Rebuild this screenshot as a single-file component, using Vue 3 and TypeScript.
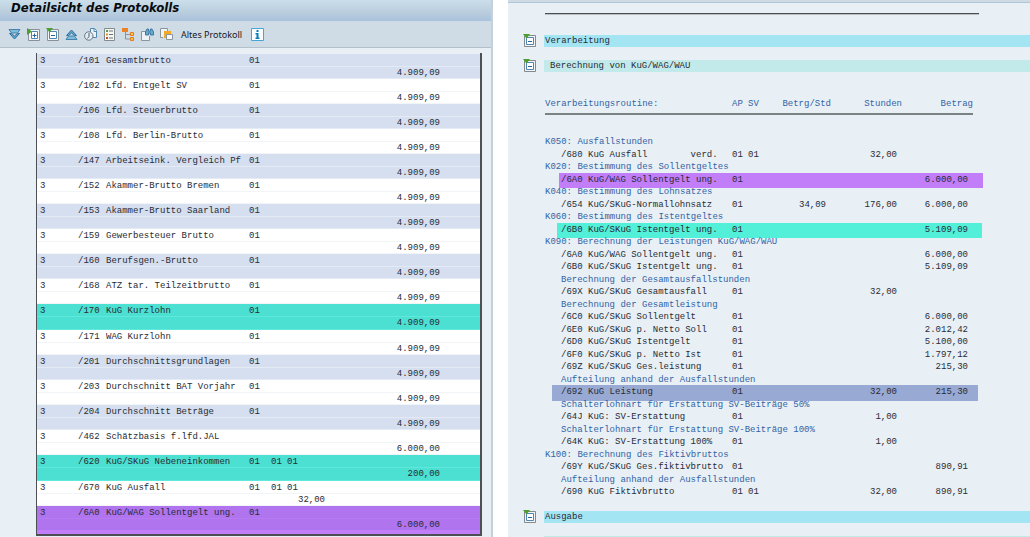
<script setup lang="ts">
interface WageRecord {
  code: string
  name: string
  ap?: string
  split?: boolean
  hours?: string
  amount?: string
  tone?: 'teal' | 'purple'
}

interface Line {
  kind: 'group' | 'sub' | 'item'
  text: string
  ap?: string
  sv?: string
  rate?: string
  hours?: string
  amount?: string
  mark?: 'purple' | 'mint' | 'indigo'
}

const rec = (code: string, name: string, extra: Partial<WageRecord> = {}): WageRecord => ({
  code,
  name,
  ap: '01',
  amount: '4.909,09',
  ...extra,
})

const records: WageRecord[] = [
  rec('/101', 'Gesamtbrutto'),
  rec('/102', 'Lfd. Entgelt SV'),
  rec('/106', 'Lfd. Steuerbrutto'),
  rec('/108', 'Lfd. Berlin-Brutto'),
  rec('/147', 'Arbeitseink. Vergleich Pf'),
  rec('/152', 'Akammer-Brutto Bremen'),
  rec('/153', 'Akammer-Brutto Saarland'),
  rec('/159', 'Gewerbesteuer Brutto'),
  rec('/160', 'Berufsgen.-Brutto'),
  rec('/168', 'ATZ tar. Teilzeitbrutto'),
  rec('/170', 'KuG Kurzlohn', { tone: 'teal' }),
  rec('/171', 'WAG Kurzlohn'),
  rec('/201', 'Durchschnittsgrundlagen'),
  rec('/203', 'Durchschnitt BAT Vorjahr'),
  rec('/204', 'Durchschnitt Beträge'),
  rec('/462', 'Schätzbasis f.lfd.JAL', { ap: '', amount: '6.000,00' }),
  rec('/620', 'KuG/SKuG Nebeneinkommen', { split: true, amount: '200,00', tone: 'teal' }),
  rec('/670', 'KuG Ausfall', { split: true, hours: '32,00', amount: '' }),
  rec('/6A0', 'KuG/WAG Sollentgelt ung.', { amount: '6.000,00', tone: 'purple' }),
]

const group = (text: string): Line => ({ kind: 'group', text })
const sub = (text: string): Line => ({ kind: 'sub', text })
const item = (text: string, extra: Partial<Line> = {}): Line => ({ kind: 'item', text, ap: '01', ...extra })

const lines: Line[] = [
  group('K050: Ausfallstunden'),
  item('/680 KuG Ausfall        verd.', { sv: '01', hours: '32,00' }),
  group('K020: Bestimmung des Sollentgeltes'),
  item('/6A0 KuG/WAG Sollentgelt ung.', { amount: '6.000,00', mark: 'purple' }),
  group('K040: Bestimmung des Lohnsatzes'),
  item('/654 KuG/SKuG-Normallohnsatz', { rate: '34,09', hours: '176,00', amount: '6.000,00' }),
  group('K060: Bestimmung des Istentgeltes'),
  item('/6B0 KuG/SKuG Istentgelt ung.', { amount: '5.109,09', mark: 'mint' }),
  group('K090: Berechnung der Leistungen KuG/WAG/WAU'),
  item('/6A0 KuG/WAG Sollentgelt ung.', { amount: '6.000,00' }),
  item('/6B0 KuG/SKuG Istentgelt ung.', { amount: '5.109,09' }),
  sub('Berechnung der Gesamtausfallstunden'),
  item('/69X KuG/SKuG Gesamtausfall', { hours: '32,00' }),
  sub('Berechnung der Gesamtleistung'),
  item('/6C0 KuG/SKuG Sollentgelt', { amount: '6.000,00' }),
  item('/6E0 KuG/SKuG p. Netto Soll', { amount: '2.012,42' }),
  item('/6D0 KuG/SKuG Istentgelt', { amount: '5.100,00' }),
  item('/6F0 KuG/SKuG p. Netto Ist', { amount: '1.797,12' }),
  item('/69Z KuG/SKuG Ges.leistung', { amount: '215,30' }),
  sub('Aufteilung anhand der Ausfallstunden'),
  item('/692 KuG Leistung', { hours: '32,00', amount: '215,30', mark: 'indigo' }),
  sub('Schalterlohnart für Erstattung SV-Beiträge 50%'),
  item('/64J KuG: SV-Erstattung', { hours: '1,00' }),
  sub('Schalterlohnart für Erstattung SV-Beiträge 100%'),
  item('/64K KuG: SV-Erstattung 100%', { hours: '1,00' }),
  group('K100: Berechnung des Fiktivbruttos'),
  item('/69Y KuG/SKuG Ges.fiktivbrutto', { amount: '890,91' }),
  sub('Aufteilung anhand der Ausfallstunden'),
  item('/690 KuG Fiktivbrutto', { sv: '01', hours: '32,00', amount: '890,91' }),
]
</script>

<template>
  <main class="screen">
    <section class="detail">
      <h1 class="title">Detailsicht des Protokolls</h1>
      <div class="toolbar">
        <button type="button" aria-label="Alles expandieren">
          <svg viewBox="0 0 13 13"><path d="M1 1.500h11L9.500 5h-6z" fill="#7fbbdd" stroke="#4682aa" /><path d="M1.500 5.500h2l3 2.500 3-2.500h2l-5 5.500z" fill="#5ba9d2" stroke="#356f99" /></svg>
        </button>
        <button type="button" aria-label="Teilbaum expandieren">
          <svg viewBox="0 0 13 13"><path d="M1.500 1.500h11v11h-11z" fill="#f1f5f7" stroke="#8a9196" /><path d="M4.500 3.500h6v7h-6z" fill="#fff" stroke="#5186b0" /><path d="M5.500 7.500h4M7.500 5.500v4" stroke="#2b6394" /><path d="M0 0l5 3.500L0 7z" fill="#4f9f2c" /></svg>
        </button>
        <button type="button" aria-label="Teilbaum komprimieren">
          <svg viewBox="0 0 13 13"><path d="M1.500 1.500h11v11h-11z" fill="#f1f5f7" stroke="#8a9196" /><path d="M3.500 3.500h7v7h-7z" fill="#fff" stroke="#5186b0" /><path d="M5 7.500h4" stroke="#2b6394" /><path d="M0 0h7L3.500 4.500z" fill="#4f9f2c" /></svg>
        </button>
        <button type="button" aria-label="Alles komprimieren">
          <svg viewBox="0 0 13 13"><path d="M1 11.500h11L9.500 8h-6z" fill="#7fbbdd" stroke="#4682aa" /><path d="M1.500 7.500h2l3-2.500 3 2.500h2l-5-5.500z" fill="#5ba9d2" stroke="#356f99" /></svg>
        </button>
        <button type="button" aria-label="Zeitscheibe">
          <svg viewBox="0 0 13 13"><path d="M6.500.500h4l2 2v7h-6z" fill="#eef5fa" stroke="#5388ae" /><path d="M10 .500v3h2.500" fill="none" stroke="#5388ae" /><circle cx="4.800" cy="8" r="4.200" fill="#e5edf3" stroke="#6b7780" /><path d="M5 5v3.500L3.500 10.500" fill="none" stroke="#3d5f7c" /></svg>
        </button>
        <button type="button" aria-label="Legende">
          <svg viewBox="0 0 13 13"><path d="M1.500.500h10v12h-10z" fill="#f6f6f1" stroke="#848b8f" /><path d="M3 2h2v2H3z" fill="#5a9a52" /><path d="M3 5.500h2v2H3z" fill="#d79a25" /><path d="M3 9h2v2H3z" fill="#b75335" /><path d="M6 3h4M6 6.500h4M6 10h4" stroke="#68747c" /></svg>
        </button>
        <button type="button" aria-label="Hierarchie">
          <svg viewBox="0 0 13 13"><path d="M3.500 4v7H8M3.500 6.500H8" fill="none" stroke="#8793a0" /><path d="M0 0h6v4H0z" fill="#ee8227" /><path d="M8.500 4.500h3v3h-3zM8.500 9.500h3v3h-3z" fill="#ffc04a" stroke="#e27d24" /></svg>
        </button>
        <button type="button" aria-label="Suchen">
          <svg viewBox="0 0 13 13"><path d="M5 3.500H.500v9h8V8" fill="#edf3f7" stroke="#8a959c" /><path d="M4.500 7V4L6 1h1.500v2h2V1H11l1.500 3v3h-3V5h-2v2z" fill="#69a7cb" stroke="#3c7aa4" /></svg>
        </button>
        <button type="button" aria-label="Nächsten Treffer suchen">
          <svg viewBox="0 0 13 13"><path d="M3 9.500H.500v-9h7V3" fill="#edf3f7" stroke="#8a959c" /><path d="M4 3h7v7H4z" fill="#f3a928" /><path d="M6.500 6.500h6v5h-6z" fill="#f7fafc" stroke="#8a959c" /></svg>
        </button>
        <button type="button" class="text-button">Altes Protokoll</button>
        <button type="button" aria-label="Information">
          <svg viewBox="0 0 13 13"><path d="M.500.500h12v12H.500z" fill="#fafdff" stroke="#49a5d5" /><path d="M5.500 2h2v2h-2zM4.500 5h3v4.500h1V11h-4V9.500h1v-3h-1z" fill="#087db9" /></svg>
        </button>
      </div>

      <div class="records-wrap">
        <table class="records" aria-label="Lohnarten">
          <colgroup>
            <col class="c-level" /><col class="c-code" /><col class="c-name" />
            <col class="c-ap" /><col class="c-one" /><col class="c-two" /><col />
          </colgroup>
          <tbody v-for="r in records" :key="r.code" :class="r.tone">
            <tr>
              <td>3</td>
              <td>{{ r.code }}</td>
              <td>{{ r.name }}</td>
              <td>{{ r.ap }}</td>
              <td>{{ r.split ? '01' : '' }}</td>
              <td>{{ r.split ? '01' : '' }}</td>
              <td></td>
            </tr>
            <tr>
              <td colspan="6" class="num">{{ r.hours }}</td>
              <td class="num amount">{{ r.amount }}</td>
            </tr>
          </tbody>
        </table>
      </div>
    </section>

    <section class="log">
      <div class="strip"></div>
      <hr class="rule" />
      <div class="section first">
        <button type="button" class="node" aria-label="Verarbeitung komprimieren">
          <svg viewBox="0 0 13 13"><path d="M1.500 1.500h11v11h-11z" fill="#f1f5f7" stroke="#84898d" /><path d="M3.500 3.500h7v7h-7z" fill="#fff" stroke="#5186b0" /><path d="M5 7.500h4" stroke="#2b6394" /><path d="M0 0h7L3.500 4.500z" fill="#4f9f2c" /></svg>
        </button>
        <h2 class="bar cyan">Verarbeitung</h2>
      </div>
      <div class="section">
        <button type="button" class="node" aria-label="Berechnung komprimieren">
          <svg viewBox="0 0 13 13"><path d="M1.500 1.500h11v11h-11z" fill="#f1f5f7" stroke="#84898d" /><path d="M3.500 3.500h7v7h-7z" fill="#fff" stroke="#5186b0" /><path d="M5 7.500h4" stroke="#2b6394" /><path d="M0 0h7L3.500 4.500z" fill="#4f9f2c" /></svg>
        </button>
        <h3 class="bar pale">Berechnung von KuG/WAG/WAU</h3>
      </div>

      <div class="lines-wrap">
        <table class="lines">
          <colgroup>
            <col class="l-indent" /><col /><col class="l-ap" /><col class="l-sv" />
            <col class="l-rate" /><col class="l-num" /><col class="l-num" />
          </colgroup>
          <thead>
            <tr>
              <th colspan="2">Verarbeitungsroutine:</th>
              <th>AP</th>
              <th>SV</th>
              <th class="right">Betrg/Std</th>
              <th class="right">Stunden</th>
              <th class="right">Betrag</th>
            </tr>
          </thead>
          <tbody>
            <tr v-for="(l, i) in lines" :key="i" :class="[l.kind, l.mark ? 'mark ' + l.mark : '']">
              <td v-if="l.kind === 'group'" colspan="7">{{ l.text }}</td>
              <template v-else-if="l.kind === 'sub'">
                <td></td>
                <td colspan="6">{{ l.text }}</td>
              </template>
              <template v-else>
                <td></td>
                <td>{{ l.text }}</td>
                <td>{{ l.ap }}</td>
                <td>{{ l.sv }}</td>
                <td class="num">{{ l.rate }}</td>
                <td class="num">{{ l.hours }}</td>
                <td class="num">{{ l.amount }}</td>
              </template>
            </tr>
          </tbody>
        </table>
      </div>

      <div class="section">
        <button type="button" class="node" aria-label="Ausgabe komprimieren">
          <svg viewBox="0 0 13 13"><path d="M1.500 1.500h11v11h-11z" fill="#f1f5f7" stroke="#84898d" /><path d="M3.500 3.500h7v7h-7z" fill="#fff" stroke="#5186b0" /><path d="M5 7.500h4" stroke="#2b6394" /><path d="M0 0h7L3.500 4.500z" fill="#4f9f2c" /></svg>
        </button>
        <h2 class="bar cyan">Ausgabe</h2>
      </div>
      <div class="section">
        <span class="node"></span>
        <div class="bar pale"></div>
      </div>
    </section>
  </main>
</template>

<style>
body {
  margin: 0;
  background: #fff;
}
</style>

<style scoped>
.screen {
  display: grid;
  grid-template-columns: 493fr 522fr;
  column-gap: 15px;
  height: 100vh;
  overflow: hidden;
  font-family: "Liberation Mono", monospace;
  font-size: 9px;
  line-height: 12px;
  color: #292b35;
}

.detail,
.log {
  min-width: 0;
  overflow: hidden;
  background: #e8f0f6;
}

.detail {
  border-right: 2px solid #c5d0d9;
}

.title {
  margin: 0;
  padding: 0 11px;
  height: 21px;
  line-height: 16px;
  font-family: "DejaVu Sans Condensed", "DejaVu Sans", sans-serif;
  font-size: 13px;
  font-weight: 700;
  font-style: italic;
  color: #080c10;
  background: linear-gradient(#cbdeea, #b9cddd 60%, #a9c2dc);
}

.toolbar {
  display: flex;
  align-items: center;
  gap: 6px;
  height: 26px;
  padding-left: 8px;
  background: #cfdce6;
  border-bottom: 1px solid #b2c0ca;
}

button {
  display: block;
  flex: none;
  margin: 0;
  padding: 0;
  border: 0;
  background: none;
  color: inherit;
  cursor: pointer;
}

svg {
  display: block;
  width: 13px;
  height: 13px;
}

.text-button {
  margin: 0 3px 0 2px;
  font-family: "Noto Sans", sans-serif;
  font-size: 9px;
  line-height: 13px;
  color: #14181e;
}

.records-wrap {
  margin: 5px 9px 0 36px;
  border: solid #4d5156;
  border-width: 0 2px 2px 1px;
  padding-top: 1px;
}

table {
  width: 100%;
  table-layout: fixed;
  border-collapse: separate;
  border-spacing: 0;
}

td,
th {
  padding: 0;
  font-weight: 400;
  text-align: left;
  vertical-align: top;
  white-space: pre;
}

.records {
  background: #fff;
}

.records td {
  height: 12px;
  line-height: 12px;
  box-shadow: inset 0 -1px #f1f5f8;
}

.records tr:first-child td {
  padding-top: 1px;
}

.records td:first-child:not(.num) {
  padding-left: 3px;
}

.c-level { width: 41px; }
.c-code { width: 28px; }
.c-name { width: 143px; }
.c-ap { width: 22px; }
.c-one { width: 16px; }
.c-two { width: 38px; }

.records tbody:nth-of-type(odd) {
  background: #d5dfef;
}

.records tbody:nth-of-type(odd) td {
  box-shadow: inset 0 -1px #e4ebf5;
}

.records tbody.teal {
  background: #4be0d1;
}

.records tbody.teal td {
  box-shadow: inset 0 -1px #5ee9dc;
}

.records tbody.teal tr:last-child td {
  padding-bottom: 1px;
}

.records tbody.purple {
  background: #af74ee;
}

.records tbody.purple td {
  box-shadow: inset 0 -1px #b67bf2;
}

.records tbody.purple tr:last-child td {
  padding-bottom: 3px;
  box-shadow: inset 0 -4px #c27df9;
}

.records .num,
.lines .num,
.right {
  text-align: right;
}

.records .amount {
  padding-right: 40px;
}

.strip {
  height: 2px;
  background: #cfdbe4;
  border-bottom: 1px solid #b3c6d6;
}

.rule {
  margin: 10px 51px 0 37px;
  border: 0;
  border-top: 1px solid #4b4f52;
  border-bottom: 1px solid #b9bfc3;
}

.section {
  display: flex;
  align-items: center;
  height: 13px;
  padding-left: 15px;
  margin-bottom: 12px;
}

.section.first {
  margin-top: 19px;
}

.node {
  width: 13px;
  margin-right: 8px;
}

.bar {
  flex: 1;
  margin: 0;
  height: 12px;
  padding-left: 1px;
  font-size: 9px;
  font-weight: 400;
  line-height: 12px;
}

.cyan {
  background: #a4e5f4;
}

.pale {
  background: #c3eaeb;
}

h3.bar {
  padding-left: 6px;
}

.lines-wrap {
  margin: 26px 57px 11px 37px;
}

.lines {
  position: relative;
  isolation: isolate;
}

.l-indent { width: 16px; }
.l-ap { width: 16px; }
.l-sv { width: 33px; }
.l-rate { width: 50px; }
.l-num { width: 71px; }

.lines th {
  padding-bottom: 3px;
  border-bottom: 2px solid #7c8284;
  color: #3263a5;
}

.lines td {
  line-height: 13px;
}

.lines tbody tr:first-child td {
  padding-top: 21px;
}

.lines tbody tr:nth-child(even) td {
  line-height: 12px;
}

.lines .num {
  padding-right: 5px;
}

.group td,
.sub td {
  color: #3263a5;
}

.mark {
  position: relative;
}

.mark td:first-child::before {
  content: "";
  position: absolute;
  z-index: -1;
  top: -1px;
  right: -10px;
  bottom: -2px;
  left: 14px;
}

.purple td:first-child::before {
  background: #c27df8;
}

.mint td:first-child::before {
  left: 12px;
  right: -9px;
  background: #52f0d8;
}

.indigo td:first-child::before {
  left: 7px;
  right: -5px;
  background: #98a9d3;
}
</style>
